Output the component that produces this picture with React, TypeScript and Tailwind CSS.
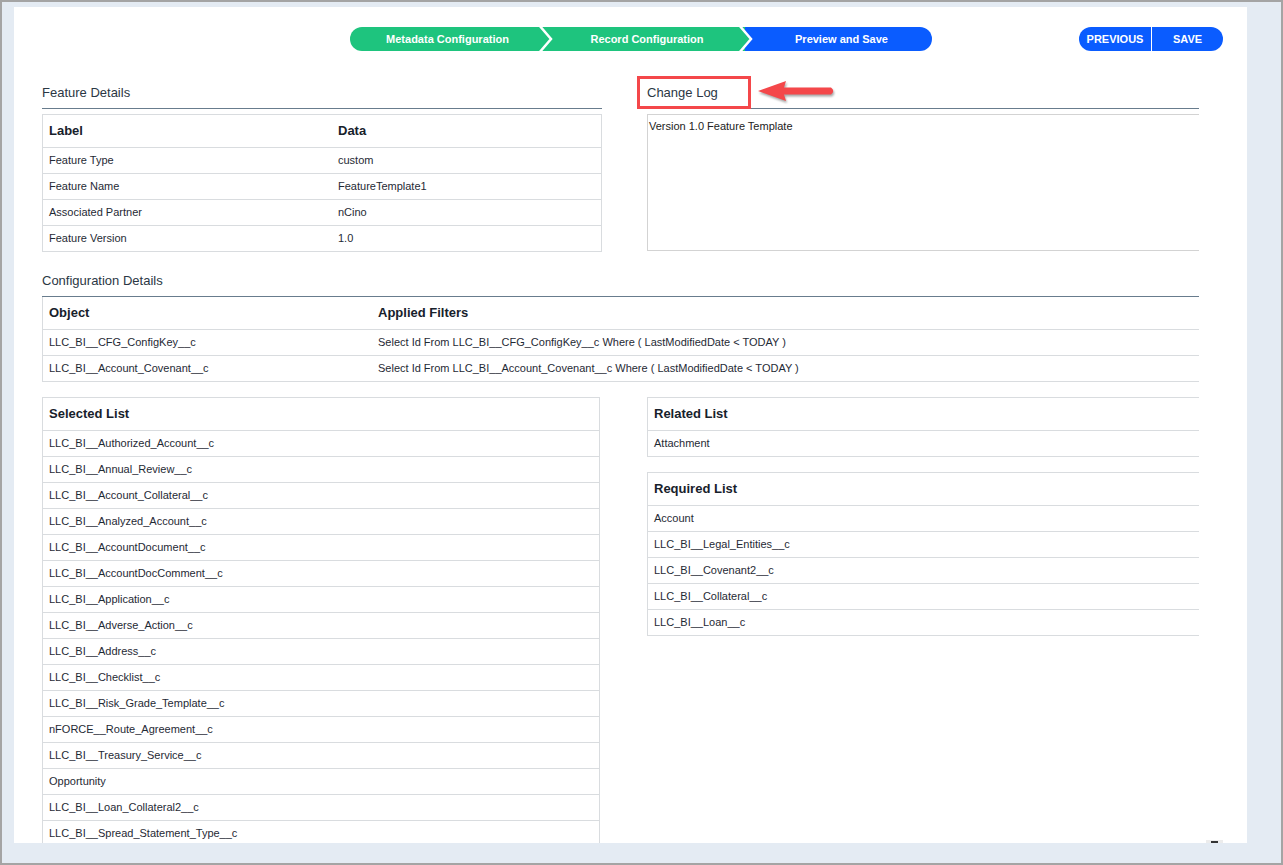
import React from 'react';

const featureRows = [
  ['Feature Type', 'custom'],
  ['Feature Name', 'FeatureTemplate1'],
  ['Associated Partner', 'nCino'],
  ['Feature Version', '1.0'],
];

const configRows = [
  ['LLC_BI__CFG_ConfigKey__c', 'Select Id From LLC_BI__CFG_ConfigKey__c Where ( LastModifiedDate < TODAY )'],
  ['LLC_BI__Account_Covenant__c', 'Select Id From LLC_BI__Account_Covenant__c Where ( LastModifiedDate < TODAY )'],
];

const selectedList = [
  'LLC_BI__Authorized_Account__c',
  'LLC_BI__Annual_Review__c',
  'LLC_BI__Account_Collateral__c',
  'LLC_BI__Analyzed_Account__c',
  'LLC_BI__AccountDocument__c',
  'LLC_BI__AccountDocComment__c',
  'LLC_BI__Application__c',
  'LLC_BI__Adverse_Action__c',
  'LLC_BI__Address__c',
  'LLC_BI__Checklist__c',
  'LLC_BI__Risk_Grade_Template__c',
  'nFORCE__Route_Agreement__c',
  'LLC_BI__Treasury_Service__c',
  'Opportunity',
  'LLC_BI__Loan_Collateral2__c',
  'LLC_BI__Spread_Statement_Type__c',
];

const requiredList = [
  'Account',
  'LLC_BI__Legal_Entities__c',
  'LLC_BI__Covenant2__c',
  'LLC_BI__Collateral__c',
  'LLC_BI__Loan__c',
];

function SectionHeading({ children }: { children: React.ReactNode }) {
  return (
    <div className="text-[13px] leading-[16px] text-[#2b3744] pt-[1px] pb-[7px] border-b border-[#687c8d]">
      {children}
    </div>
  );
}

function ListTable({ title, items, open }: { title: string; items: string[]; open?: boolean }) {
  return (
    <div className={`border-t border-l border-[#d9dcdf] ${open ? '' : 'border-r'}`}>
      <div className="h-[33px] flex items-center px-[6px] border-b border-[#d9dcdf] text-[13px] font-bold text-[#17212b]">
        {title}
      </div>
      {items.map((item, i) => (
        <div
          key={i}
          className="h-[26px] flex items-center px-[6px] border-b border-[#d9dcdf] text-[11px] text-[#1f2a35]"
        >
          {item}
        </div>
      ))}
    </div>
  );
}

function Stepper() {
  return (
    <div className="relative w-[582px] h-[24px] flex rounded-full overflow-hidden text-white text-[11px] font-bold">
      <div className="w-[195px] bg-[#1ec47e] flex items-center justify-center">Metadata Configuration</div>
      <div className="w-[200px] bg-[#1ec47e] flex items-center justify-center pl-[4px]">Record Configuration</div>
      <div className="flex-1 bg-[#0a5cff] flex items-center justify-center pl-[6px]">Preview and Save</div>
      <svg className="absolute left-0 top-0" width="582" height="24" viewBox="0 0 582 24">
        <polyline points="189,-2 201,12 189,26" fill="none" stroke="#ffffff" strokeWidth="2.5" />
        <polygon points="380,0 388,0 400,12 388,24 380,24" fill="#1ec47e" />
        <polyline points="389,-2 401,12 389,26" fill="none" stroke="#ffffff" strokeWidth="2.5" />
      </svg>
    </div>
  );
}

export default function App() {
  return (
    <div className="w-[1283px] h-[865px] bg-[#a4a4a4] p-[2px] overflow-hidden font-['Liberation_Sans',Arial,sans-serif]">
      <div className="w-full h-full bg-[#e4ebf3] pl-[12px] pt-[5px]">
        <div className="relative w-[1233px] h-[836px] bg-white overflow-hidden pl-[28px] pt-[20px]">
          {/* Top bar */}
          <div className="flex items-center h-[24px]">
            <div className="ml-[308px]">
              <Stepper />
            </div>
            <div className="ml-[147px] flex h-[24px] w-[144px] rounded-full bg-[#0a5cff] overflow-hidden text-white text-[11px] font-bold">
              <div className="w-[73px] flex items-center justify-center border-r border-white">PREVIOUS</div>
              <div className="flex-1 flex items-center justify-center">SAVE</div>
            </div>
          </div>

          {/* Feature Details + Change Log */}
          <div className="mt-[33px] flex gap-[45px]">
            <div className="w-[560px]">
              <SectionHeading>Feature Details</SectionHeading>
              <div className="mt-[5px] border-t border-l border-r border-[#d9dcdf]">
                <div className="h-[33px] flex items-center border-b border-[#d9dcdf] text-[13px] font-bold text-[#17212b]">
                  <div className="w-[295px] px-[6px]">Label</div>
                  <div className="flex-1">Data</div>
                </div>
                {featureRows.map(([label, value]) => (
                  <div
                    key={label}
                    className="h-[26px] flex items-center border-b border-[#d9dcdf] text-[11px] text-[#1f2a35]"
                  >
                    <div className="w-[295px] px-[6px]">{label}</div>
                    <div className="flex-1">{value}</div>
                  </div>
                ))}
              </div>
            </div>
            <div className="w-[552px]">
              <div className="relative">
                <SectionHeading>Change Log</SectionHeading>
                <div className="absolute left-[-10px] top-[-8px] w-[114px] h-[33px] border-[3px] border-[#f4474a]" />
                <svg
                  className="absolute left-[111px] top-[-3px] drop-shadow-[1px_2px_1px_rgba(0,0,0,0.35)]"
                  width="80"
                  height="22"
                  viewBox="0 0 80 22"
                >
                  <path
                    d="M0 10 L28 0 L26 6.5 L73 6.5 Q77.5 10 73 13.5 L26 13.5 L28 20 Z"
                    fill="#f4474a"
                  />
                </svg>
              </div>
              <div className="mt-[5px] h-[137px] border-t border-l border-b border-[#d3d3d3] pl-[1px] pt-[3px] text-[11px] text-[#222]">
                Version 1.0 Feature Template
              </div>
            </div>
          </div>

          {/* Configuration Details */}
          <div className="mt-[20px] w-[1157px]">
            <SectionHeading>Configuration Details</SectionHeading>
            <div className="border-l border-[#d9dcdf]">
              <div className="h-[33px] flex items-center border-b border-[#d9dcdf] text-[13px] font-bold text-[#17212b]">
                <div className="w-[335px] px-[6px]">Object</div>
                <div className="flex-1">Applied Filters</div>
              </div>
              {configRows.map(([obj, filter]) => (
                <div
                  key={obj}
                  className="h-[26px] flex items-center border-b border-[#d9dcdf] text-[11px] text-[#1f2a35]"
                >
                  <div className="w-[335px] px-[6px]">{obj}</div>
                  <div className="flex-1">{filter}</div>
                </div>
              ))}
            </div>
          </div>

          {/* Lists */}
          <div className="mt-[15px] flex">
            <div className="w-[558px]">
              <ListTable title="Selected List" items={selectedList} />
            </div>
            <div className="ml-[47px] w-[552px]">
              <ListTable title="Related List" items={['Attachment']} open />
              <div className="mt-[15px]">
                <ListTable title="Required List" items={requiredList} open />
              </div>
            </div>
          </div>

          {/* partially hidden control at bottom */}
          <div className="absolute left-[1192px] bottom-0 w-[17px] h-[3px] bg-[#ececec] flex justify-center">
            <div className="w-[7px] h-[2px] mt-[1px] bg-[#333]" />
          </div>
        </div>
      </div>
    </div>
  );
}
